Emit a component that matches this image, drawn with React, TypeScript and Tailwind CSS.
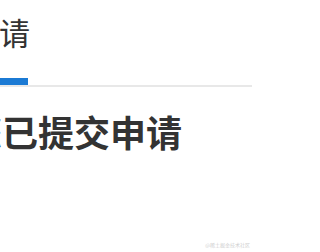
export default function App() {
  return (
    <div
      className="relative w-[252px] h-[252px] overflow-hidden bg-white"
      style={{ fontFamily: '"Noto Sans CJK SC", "Noto Sans", sans-serif' }}
    >
      <div className="pt-[12px] h-[78px]">
        <div className="ml-[-94px] whitespace-nowrap text-[31px] leading-[40px] font-normal text-[#333]">
          提交申请
        </div>
      </div>
      <div className="border-b-2 border-[#e8e8e8]">
        <div className="w-[28px] h-[7px] bg-[#1b7ad4]" />
      </div>
      <div className="pt-[20px]">
        <div className="ml-[-34px] whitespace-nowrap text-[36px] leading-[48px] font-bold text-[#333]">
          您已提交申请
        </div>
      </div>
      <div className="absolute right-[2px] bottom-[5px] text-[5px] leading-[5px] text-[#cfcfcf]">
        @稀土掘金技术社区
      </div>
    </div>
  );
}
